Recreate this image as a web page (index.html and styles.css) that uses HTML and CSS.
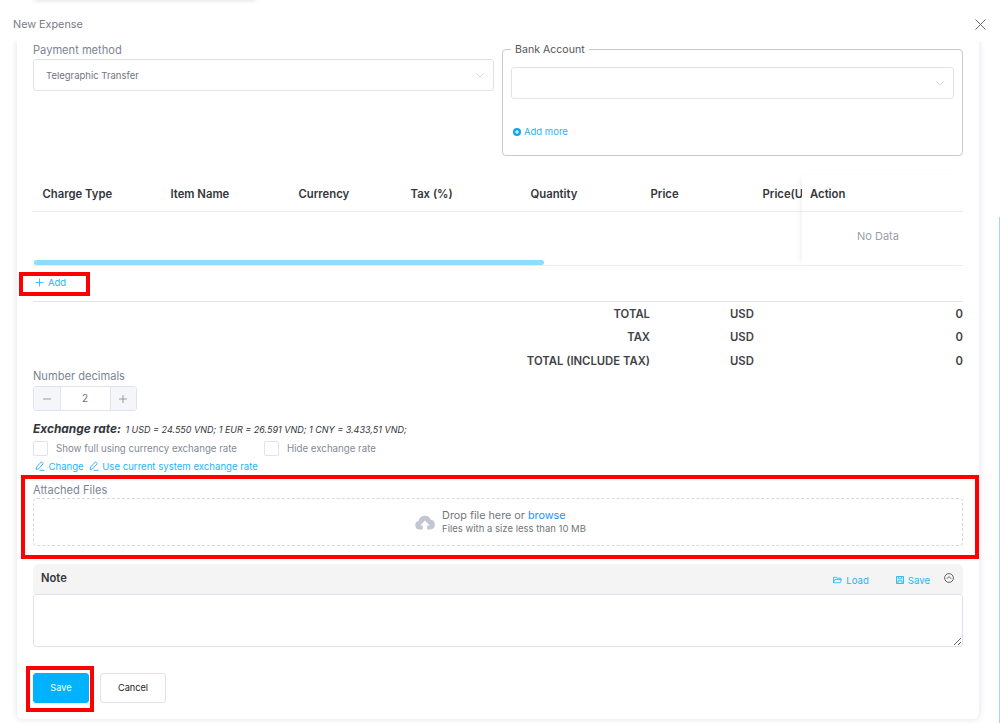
FILE: index.html
```html
<!DOCTYPE html>
<html lang="en">
<head>
    <meta charset="UTF-8">
    <meta name="viewport" content="width=device-width, initial-scale=1.0">
    <title>New Expense</title>
    <link rel="stylesheet" href="styles.css">
</head>
<body>
    <div class="top-sliver"></div>
    <div class="page-scroll"></div>

    <header class="modal-head">
        <span class="modal-title">New Expense</span>
        <svg class="close-icon" viewBox="0 0 11 11" width="11" height="11"><path d="M.5.5l10 10M10.5.5l-10 10" fill="none" stroke="#666b75" stroke-width="1"/></svg>
    </header>

    <main class="panel">
        <section class="pay-row">
            <div class="pay-col">
                <label class="field-label">Payment method</label>
                <div class="select">
                    <span>Telegraphic Transfer</span>
                    <svg class="chevron" viewBox="0 0 8 5" width="8" height="5"><path d="M.5.5L4 4 7.5.5" fill="none" stroke="#c9ccd6" stroke-width=".8"/></svg>
                </div>
            </div>
            <fieldset class="bank-box">
                <legend>Bank Account</legend>
                <div class="select">
                    <span></span>
                    <svg class="chevron" viewBox="0 0 8 5" width="8" height="5"><path d="M.5.5L4 4 7.5.5" fill="none" stroke="#c9ccd6" stroke-width=".8"/></svg>
                </div>
                <a class="add-more">
                    <svg viewBox="0 0 8 8" width="8" height="8"><circle cx="4" cy="4" r="4" fill="#12a5f0"/><path d="M4 2v4M2 4h4" stroke="#fff" stroke-width="1"/></svg>
                    Add more
                </a>
            </fieldset>
        </section>

        <section class="charge-table">
            <div class="table-scroll">
                <div class="table-head">
                    <div class="th w-128">Charge Type</div>
                    <div class="th w-128">Item Name</div>
                    <div class="th w-112">Currency</div>
                    <div class="th w-120">Tax (%)</div>
                    <div class="th w-120">Quantity</div>
                    <div class="th w-112">Price</div>
                    <div class="th w-120">Price(USD)</div>
                </div>
                <div class="table-body"></div>
                <div class="scroll-thumb"></div>
            </div>
            <div class="action-col">
                <div class="th action-th">Action</div>
                <div class="no-data">No Data</div>
            </div>
        </section>

        <a class="add-line">
            <svg viewBox="0 0 9 9" width="9" height="9"><path d="M4.500.5v8M.5 4.500h8" stroke="#1fb4f5" stroke-width=".8" fill="none"/></svg>
            Add
        </a>

        <section class="totals">
            <div class="total-row"><span class="total-label">TOTAL</span><span class="total-cur">USD</span><span class="total-val">0</span></div>
            <div class="total-row"><span class="total-label">TAX</span><span class="total-cur">USD</span><span class="total-val">0</span></div>
            <div class="total-row"><span class="total-label">TOTAL (INCLUDE TAX)</span><span class="total-cur">USD</span><span class="total-val">0</span></div>
        </section>

        <label class="field-label decimals-label">Number decimals</label>
        <div class="stepper">
            <span class="step-btn">
                <svg viewBox="0 0 8 8" width="8" height="8"><path d="M0 4h8" stroke="#7f8590" stroke-width=".8"/></svg>
            </span>
            <span class="step-value">2</span>
            <span class="step-btn">
                <svg viewBox="0 0 8 8" width="8" height="8"><path d="M0 4h8M4 0v8" stroke="#7f8590" stroke-width=".8"/></svg>
            </span>
        </div>

        <p class="rate-line"><strong>Exchange rate:</strong> <span>1 USD = 24.550 VND; 1 EUR = 26.591 VND; 1 CNY = 3.433,51 VND;</span></p>

        <div class="check-row">
            <span class="check-box"></span><span class="check-text first">Show full using currency exchange rate</span>
            <span class="check-box"></span><span class="check-text">Hide exchange rate</span>
        </div>

        <div class="rate-links">
            <a>
                <svg viewBox="0 0 10 10" width="10" height="10"><path d="M1.200 8.600L1.600 6 6.400.8l1.900 1.800L3.600 7.800zM4.500 9.300h5" fill="none" stroke="#1fb4f5" stroke-width=".9"/></svg>
                Change
            </a>
            <a>
                <svg viewBox="0 0 10 10" width="10" height="10"><path d="M1.200 8.600L1.600 6 6.400.8l1.900 1.800L3.600 7.800zM4.500 9.300h5" fill="none" stroke="#1fb4f5" stroke-width=".9"/></svg>
                Use current system exchange rate
            </a>
        </div>

        <label class="field-label files-label">Attached Files</label>
        <div class="dropzone">
            <svg class="cloud" viewBox="0 0 20 16" width="20" height="16"><path d="M4.600 15.500A4.300 4.300 0 0 1 3.700 7 6.300 6.300 0 0 1 15.800 5.800 4.900 4.900 0 0 1 15.500 15.500h-3.300v-4h2.500L10 6.600 5.300 11.500h2.500v4z" fill="#c2c6d0"/></svg>
            <div class="drop-text">
                <div class="drop-main">Drop file here or <a>browse</a></div>
                <div class="drop-sub">Files with a size less than 10 MB</div>
            </div>
        </div>

        <section class="note">
            <div class="note-head">
                <span class="note-title">Note</span>
                <a class="note-link load">
                    <svg viewBox="0 0 10 8" width="9" height="8"><path d="M.5 7V1h3l1 1h4v1.500M.5 7h7.500l1.500-3.500H2L.5 7z" fill="none" stroke="#1fb4f5" stroke-width=".9"/></svg>
                    Load
                </a>
                <a class="note-link">
                    <svg viewBox="0 0 8 8" width="8" height="8"><path d="M.5.5h7v7h-7zM2.200.5v2.300h3.600V.5M2 7.500V4.800h4v2.700" fill="none" stroke="#1fb4f5" stroke-width=".9"/></svg>
                    Save
                </a>
                <svg class="collapse" viewBox="0 0 10 10" width="10" height="10"><circle cx="5" cy="5" r="4.400" fill="none" stroke="#555" stroke-width=".9"/><path d="M2.800 5.800L5 3.600l2.200 2.200" fill="none" stroke="#555" stroke-width=".9"/></svg>
            </div>
            <textarea class="note-input"></textarea>
        </section>

        <div class="actions">
            <button class="btn btn-primary">Save</button>
            <button class="btn">Cancel</button>
        </div>
    </main>

    <!-- red callouts drawn over the screenshot -->
    <div class="callout callout-add"></div>
    <div class="callout callout-files"></div>
    <div class="callout callout-save"></div>
</body>
</html>
```

FILE: styles.css
```css
* {
    margin: 0;
    padding: 0;
    box-sizing: border-box;
    font-family: Inter, "Liberation Sans", sans-serif;
}

html, body {
    height: 723px;
    overflow: hidden;
}

body {
    background-color: #fff;
    position: relative;
}

a {
    color: #1fb4f5;
}

.top-sliver {
    position: absolute;
    left: 35px;
    top: -4px;
    width: 220px;
    height: 4px;
    box-shadow: 0 1px 4px rgba(90, 90, 120, 0.18);
}

.page-scroll {
    position: absolute;
    right: 0;
    top: 217px;
    bottom: 0;
    width: 1px;
    background-color: #9fd8f5;
}

.modal-head {
    height: 41px;
    display: flex;
    justify-content: space-between;
    align-items: center;
    padding: 7px 14px 0 13px;
}

.modal-title {
    font-size: 10.8px;
    color: #777b84;
}

.panel {
    width: 962px;
    height: 678px;
    margin-left: 17px;
    padding: 0 16px;
    background-color: #fff;
    border-radius: 0 0 6px 6px;
    box-shadow: 0 0 6px rgba(100, 100, 150, 0.2);
    clip-path: inset(0 -8px -8px -8px);
}

.field-label {
    display: block;
    font-size: 11.1px;
    line-height: 14px;
    color: #7c8494;
}

.pay-row {
    display: flex;
    gap: 8px;
    height: 115px;
}

.pay-col {
    width: 461px;
    padding-top: 2px;
}

.pay-col .field-label {
    margin-bottom: 2px;
}

.select {
    height: 32px;
    border: 1px solid #e2e2ee;
    border-radius: 3px;
    display: flex;
    justify-content: space-between;
    align-items: center;
    padding: 0 9px 0 12px;
    font-size: 9.5px;
    color: #70757f;
    background-color: #fff;
}

.bank-box {
    width: 461px;
    height: 115px;
    border: 1px solid #c9c9ce;
    border-radius: 4px;
    padding: 10px 8px 0 8px;
}

.bank-box legend {
    padding: 2px 4px 0;
    font-size: 10.6px;
    line-height: 14px;
    color: #555;
}

.add-more {
    display: flex;
    align-items: center;
    gap: 3px;
    margin-top: 27px;
    margin-left: 2px;
    font-size: 9.5px;
    line-height: 12px;
}

.charge-table {
    height: 91px;
    margin-top: 19px;
    display: flex;
    position: relative;
    border-bottom: 1px solid #ebebf3;
}

.table-scroll {
    width: 769px;
    overflow: hidden;
    flex-shrink: 0;
}

.table-head {
    display: flex;
    width: 900px;
    height: 36px;
}

.th {
    flex-shrink: 0;
    padding: 13px 0 0 9.5px;
    font-size: 11.3px;
    line-height: 13px;
    font-weight: 600;
    color: #33363b;
}

.w-128 { width: 128px; }
.w-120 { width: 120px; }
.w-112 { width: 112px; }

.table-body {
    height: 49px;
    border-top: 1px solid #ebebf3;
}

.scroll-thumb {
    width: 510px;
    height: 5px;
    margin-left: 1px;
    background-color: #8fdcff;
    border-radius: 3px;
}

.action-col {
    width: 161px;
    box-shadow: -4px 0 5px -3px rgba(90, 90, 120, 0.1);
    background-color: #fff;
}

.action-th {
    height: 37px;
    padding-left: 8px;
    border-bottom: 1px solid #ebebf3;
}

.no-data {
    padding: 18px 9px 0 0;
    text-align: center;
    font-size: 11px;
    line-height: 13px;
    color: #9b9ea6;
}

.add-line {
    display: flex;
    align-items: center;
    gap: 4px;
    height: 36px;
    padding: 0 0 3px 2px;
    font-size: 9.5px;
    border-bottom: 1px solid #e3e3ea;
}

.totals {
    height: 67px;
}

.total-row {
    display: flex;
    height: 23.500px;
    align-items: center;
    font-size: 11.3px;
    font-weight: 600;
    color: #414246;
}

.total-label {
    width: 617px;
    text-align: right;
}

.total-cur {
    margin-left: 80px;
}

.total-val {
    margin-left: auto;
}

.stepper {
    display: flex;
    width: 104px;
    height: 25px;
    margin-top: 3px;
    border: 1px solid #e2e2ee;
    border-radius: 3px;
    overflow: hidden;
}

.step-btn {
    width: 25.500px;
    display: flex;
    align-items: center;
    justify-content: center;
    background-color: #f5f6fa;
}

.step-value {
    flex: 1;
    text-align: center;
    font-size: 10px;
    line-height: 23px;
    color: #6e727b;
    border-left: 1px solid #e2e2ee;
    border-right: 1px solid #e2e2ee;
}

.rate-line {
    margin-top: 8px;
    line-height: 16px;
    font-style: italic;
    color: #33363b;
}

.rate-line strong {
    font-size: 11.9px;
    font-weight: 700;
}

.rate-line span {
    font-size: 9px;
}

.check-row {
    display: flex;
    align-items: center;
    margin-top: 3px;
    height: 15px;
}

.check-box {
    width: 15px;
    height: 15px;
    border: 1px solid #e2e2ee;
    border-radius: 2px;
    margin-right: 8px;
}

.check-text {
    font-size: 9.7px;
    color: #848a96;
}

.check-text.first {
    width: 208px;
}

.rate-links {
    display: flex;
    gap: 5px;
    margin-top: 3px;
    padding-left: 2px;
    height: 14px;
    align-items: center;
    font-size: 9.6px;
}

.rate-links a {
    display: flex;
    align-items: center;
    gap: 3.5px;
}

.files-label {
    margin-top: 10px;
}

.dropzone {
    height: 48px;
    margin-top: 1px;
    padding-left: 5px;
    border: 1px dashed #d8d8de;
    border-radius: 4px;
    display: flex;
    justify-content: center;
    align-items: center;
    gap: 7px;
}

.drop-text {
    color: #72757c;
}

.drop-main {
    font-size: 10.8px;
    line-height: 13px;
}

.drop-main a {
    color: #1890ff;
}

.drop-sub {
    font-size: 9.5px;
    line-height: 13px;
}

.note {
    margin-top: 18px;
}

.note-head {
    height: 30px;
    display: flex;
    align-items: center;
    padding: 0 9px 0 8px;
    background-color: #f4f4f4;
    border-radius: 6px 6px 0 0;
}

.note-title {
    font-size: 11.2px;
    font-weight: 600;
    color: #33363b;
    margin-right: auto;
    margin-bottom: 2px;
}

.note-link {
    display: flex;
    align-items: center;
    gap: 4px;
    padding-top: 2px;
    font-size: 9.6px;
}

.note-link.load {
    margin-right: 27px;
}

.collapse {
    margin-left: 14px;
    margin-bottom: 2px;
}

.note-input {
    display: block;
    width: 100%;
    height: 53px;
    border: 1px solid #e2e2ee;
    border-radius: 3px;
    outline: none;
}

.actions {
    display: flex;
    gap: 11px;
    margin-top: 26px;
}

.btn {
    width: 66px;
    height: 30px;
    padding-bottom: 2px;
    background-color: #fff;
    border: 1px solid #e2e2ee;
    border-radius: 3px;
    font-size: 9.2px;
    color: #222;
}

.btn-primary {
    width: 56px;
    background-color: #00b2ff;
    border-color: #00b2ff;
    color: #fff;
}

.callout {
    position: absolute;
    border: 4px solid #f00;
}

.callout-add {
    left: 19px;
    top: 272px;
    width: 71px;
    height: 24px;
}

.callout-files {
    left: 21px;
    top: 475px;
    width: 958px;
    height: 84px;
}

.callout-save {
    left: 26px;
    top: 666px;
    width: 68px;
    height: 46px;
}
```
